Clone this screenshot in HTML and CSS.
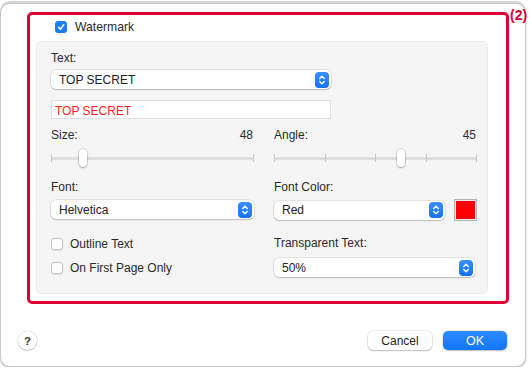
FILE: index.html
```html
<!DOCTYPE html>
<html lang="en">
<head>
  <meta charset="UTF-8" />
  <title>Watermark</title>
  <link rel="stylesheet" href="styles.css">
</head>
<body>
<div class="window">
  <span class="callout">(2)</span>

  <section class="highlight">
    <label class="check head">
      <span class="box on"><svg viewBox="0 0 12 12"><path d="M3 6.4 L5.2 8.6 L9.3 3.4"/></svg></span>
      Watermark
    </label>

    <div class="panel">
      <div class="label">Text:</div>
      <div class="popup wide">
        <span>TOP SECRET</span>
        <span class="stepper"><svg viewBox="0 0 14 17"><path d="M4.6 7 L7 4.6 L9.4 7 M4.6 10 L7 12.4 L9.4 10"/></svg></span>
      </div>
      <div class="field">TOP SECRET</div>

      <div class="grid">
        <div class="col">
          <div class="label split"><span>Size:</span><span>48</span></div>
          <div class="slider">
            <div class="ticks"><i></i><i></i></div>
            <div class="knob" style="left: 14%"></div>
          </div>
          <div class="label gap-l">Font:</div>
          <div class="popup gap-s">
            <span>Helvetica</span>
            <span class="stepper"><svg viewBox="0 0 14 17"><path d="M4.6 7 L7 4.6 L9.4 7 M4.6 10 L7 12.4 L9.4 10"/></svg></span>
          </div>
          <div class="checks">
            <label class="check"><span class="box"></span>Outline Text</label>
            <label class="check"><span class="box"></span>On First Page Only</label>
          </div>
        </div>

        <div class="col">
          <div class="label split"><span>Angle:</span><span>45</span></div>
          <div class="slider">
            <div class="ticks"><i></i><i></i><i></i><i></i><i></i></div>
            <div class="knob" style="left: 60.5%"></div>
          </div>
          <div class="label gap-l">Font Color:</div>
          <div class="color-row">
            <div class="popup grow">
              <span>Red</span>
              <span class="stepper"><svg viewBox="0 0 14 17"><path d="M4.6 7 L7 4.6 L9.4 7 M4.6 10 L7 12.4 L9.4 10"/></svg></span>
            </div>
            <div class="well"><span></span></div>
          </div>
          <div class="label gap-t">Transparent Text:</div>
          <div class="popup gap-p">
            <span>50%</span>
            <span class="stepper"><svg viewBox="0 0 14 17"><path d="M4.6 7 L7 4.6 L9.4 7 M4.6 10 L7 12.4 L9.4 10"/></svg></span>
          </div>
        </div>
      </div>
    </div>
  </section>

  <footer class="footer">
    <button class="help" type="button">?</button>
    <div class="actions">
      <button class="btn" type="button">Cancel</button>
      <button class="btn primary" type="button">OK</button>
    </div>
  </footer>
</div>
</body>
</html>
```

FILE: styles.css
```css
* {
  box-sizing: border-box;
}

body {
  margin: 0;
  background: #fff;
  font-family: 'Liberation Sans', Arial, sans-serif;
  font-size: 12px;
  color: #262626;
}

.window {
  position: relative;
  width: 526px;
  height: 364px;
  margin-top: 3px;
  background: #fff;
  border: 1px solid #c9c9c9;
  border-radius: 10px;
  box-shadow: 0 -2px 0 #d6d6d6, 0 1px 2px rgba(0,0,0,0.25);
}

.callout {
  position: absolute;
  top: 3px;
  left: 509px;
  font-weight: bold;
  font-size: 14px;
  color: #d8003a;
}

.highlight {
  margin: 8px 16px 0 26px;
  border: 3px solid #dc0036;
  border-radius: 5px;
  padding: 6px 18px 7px 6px;
}

.check {
  display: flex;
  align-items: center;
  gap: 7px;
  height: 12px;
  line-height: 12px;
  color: #2a2a2a;
}

.check.head {
  padding-left: 19px;
  gap: 8px;
  font-size: 12.2px;
}

.box {
  width: 12px;
  height: 12px;
  flex: none;
  background: #fff;
  border: 1px solid #c6c6c6;
  border-radius: 3px;
  box-shadow: 0 0.5px 1px rgba(0,0,0,0.08);
}

.box.on {
  width: 12px;
  height: 12px;
  background: #1b7cf5;
  border-color: #1b7cf5;
}

.box svg {
  display: block;
  width: 10px;
  height: 10px;
  fill: none;
  stroke: #fff;
  stroke-width: 1.8;
  stroke-linecap: round;
  stroke-linejoin: round;
}

.panel {
  margin-top: 8px;
  background: #f5f5f5;
  border: 1px solid #ececec;
  border-radius: 5px;
  padding: 9px 10px 16px 14px;
}

.label {
  line-height: 14px;
  height: 14px;
  color: #2a2a2a;
}

.split {
  display: flex;
  justify-content: space-between;
  padding-right: 1px;
}

.popup {
  display: flex;
  align-items: center;
  justify-content: space-between;
  height: 19px;
  padding: 0 2px 0 8px;
  background: #fff;
  border-radius: 5px;
  box-shadow: 0 0 0 0.5px rgba(0,0,0,0.14), 0 1px 1.5px rgba(0,0,0,0.18);
  color: #222;
}

.popup.wide {
  width: 280px;
  margin-top: 5px;
}

.stepper {
  width: 14px;
  height: 16px;
  border-radius: 4px;
  background: linear-gradient(#3a8ffc, #1673f3);
}

.stepper svg {
  display: block;
  width: 14px;
  height: 16px;
  fill: none;
  stroke: #fff;
  stroke-width: 1.5;
  stroke-linecap: round;
  stroke-linejoin: round;
}

.field {
  width: 280px;
  height: 19px;
  margin-top: 11px;
  padding: 1px 0 0 3px;
  line-height: 18px;
  background: #fff;
  border: 1px solid #e0e0e0;
  color: #ff1f26;
}

.grid {
  display: grid;
  grid-template-columns: 203px 203px;
  column-gap: 20px;
  margin-top: 9px;
}

.slider {
  position: relative;
  height: 18px;
  margin-top: 7px;
}

.ticks {
  display: flex;
  justify-content: space-between;
  align-items: center;
  height: 18px;
  background: linear-gradient(#dedede, #dedede) center / 100% 3px no-repeat;
}

.ticks i {
  width: 1px;
  height: 8px;
  background: #c8c8c8;
}

.knob {
  position: absolute;
  top: 0;
  width: 8px;
  height: 18px;
  background: #fff;
  border-radius: 4px;
  box-shadow: 0 0 0 0.5px rgba(0,0,0,0.2), 0 1px 2px rgba(0,0,0,0.25);
}

.gap-l {
  margin-top: 13px;
}

.gap-s {
  margin-top: 6px;
}

.checks {
  display: flex;
  flex-direction: column;
  gap: 12px;
  margin-top: 19px;
}

.color-row {
  display: flex;
  align-items: center;
  gap: 9px;
  margin-top: 5px;
}

.grow {
  width: 171px;
}

.well {
  width: 23px;
  height: 22px;
  padding: 1px;
  border: 1px solid #b3b3b3;
  background: #ececec;
}

.well span {
  display: block;
  height: 100%;
  background: #ff0000;
}

.gap-t {
  margin-top: 15px;
}

.gap-p {
  width: 201px;
  margin-top: 8px;
}

.footer {
  display: flex;
  justify-content: space-between;
  align-items: center;
  margin-top: 27px;
  padding: 0 18px 0 17px;
}

button {
  font-family: inherit;
  font-size: 12px;
  border: none;
  cursor: pointer;
}

.help {
  width: 19px;
  height: 19px;
  padding: 0;
  border-radius: 50%;
  background: #fff;
  color: #333;
  font-weight: bold;
  font-size: 11.5px;
  box-shadow: 0 0 0 0.5px rgba(0,0,0,0.15), 0 1px 1.5px rgba(0,0,0,0.2);
}

.actions {
  display: flex;
  gap: 11px;
}

.btn {
  width: 64px;
  height: 19px;
  padding: 0;
  border-radius: 5px;
  background: #fff;
  color: #222;
  box-shadow: 0 0 0 0.5px rgba(0,0,0,0.15), 0 1px 1.5px rgba(0,0,0,0.2);
}

.btn.primary {
  background: linear-gradient(#2d8cfd, #0f76f4);
  color: #fff;
  font-weight: 500;
  font-size: 12.5px;
}
```
